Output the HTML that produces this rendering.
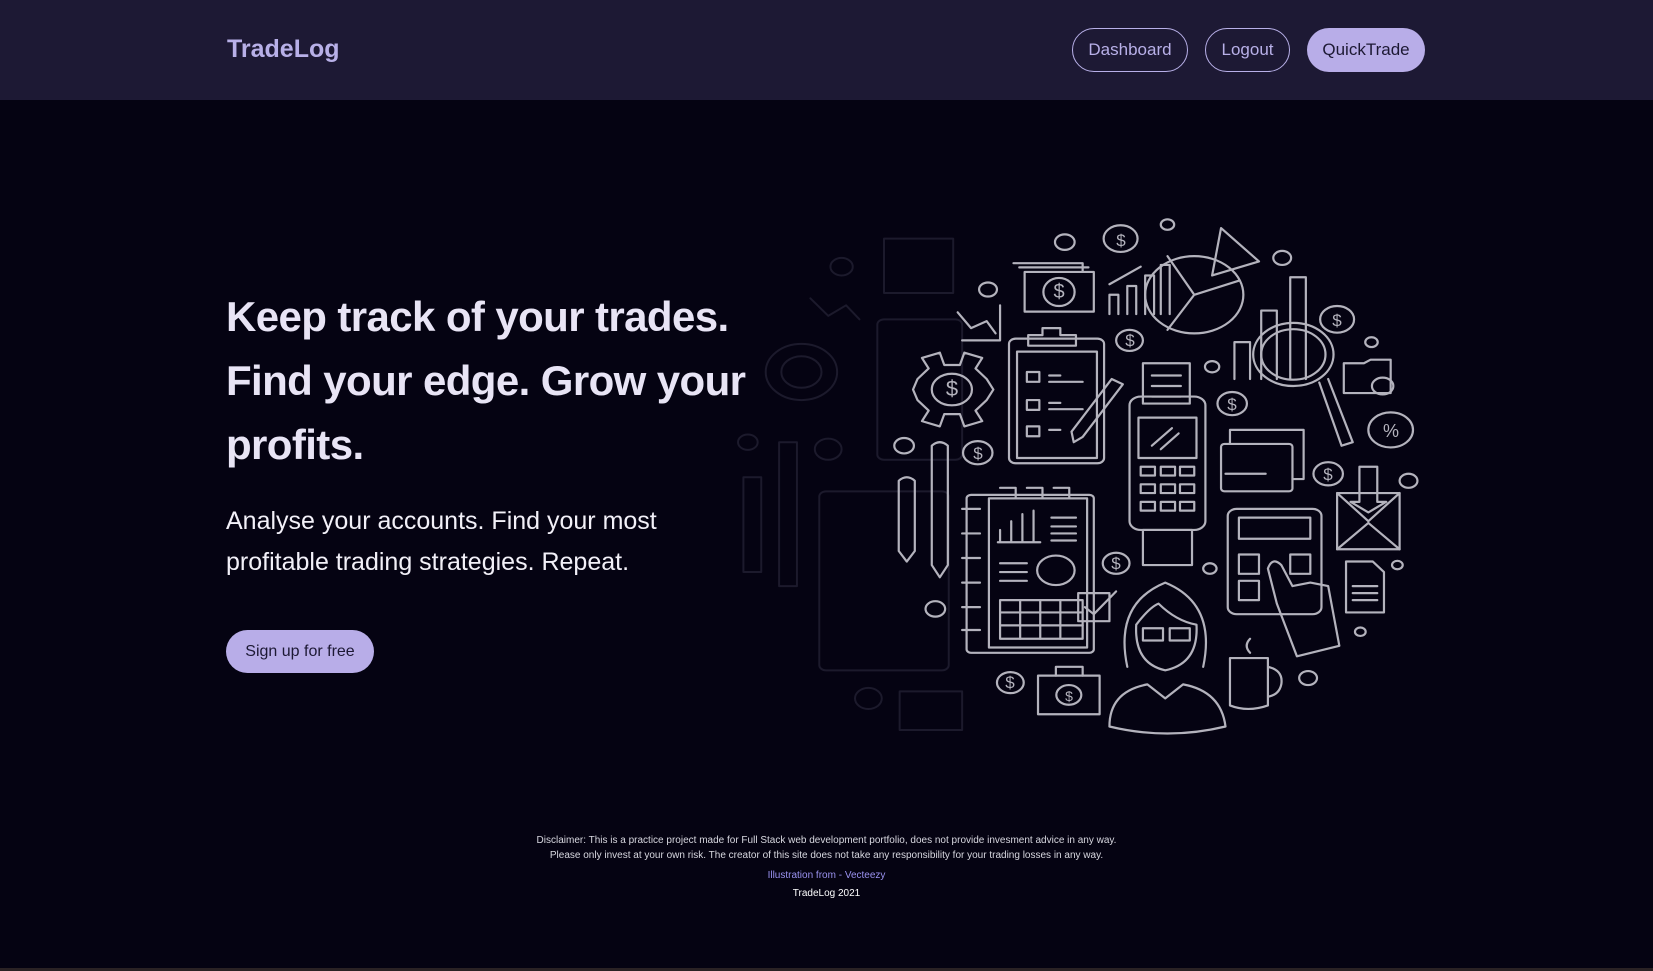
<!DOCTYPE html>
<html><head><meta charset="utf-8"><style>
*{margin:0;padding:0;box-sizing:border-box}
body{width:1653px;height:971px;background:#050312;overflow:hidden;font-family:"Liberation Sans",sans-serif;position:relative}
header{position:absolute;left:0;top:0;width:1653px;height:100px;background:#1d1934}
.logo{position:absolute;left:227px;top:35px;font-size:25px;font-weight:bold;color:#b8b0e8}
.btn{position:absolute;top:28px;height:44px;border-radius:22px;border:1px solid #b8b0e8;color:#b8b0e8;font-size:17px;line-height:42px;text-align:center}
.qt{background:#b8ade8;color:#1d1934;border:none;line-height:44px}
h1{position:absolute;left:226px;top:285px;width:560px;font-size:42px;line-height:64px;font-weight:bold;color:#e8e4f5;letter-spacing:-0.6px}
.sub{position:absolute;left:226px;top:501px;font-size:25px;line-height:41px;color:#f2f0f8}
.su{position:absolute;left:226px;top:630px;width:148px;height:43px;border-radius:22px;background:#b8ade8;color:#1d1934;font-size:16px;line-height:43px;text-align:center}
.foot{position:absolute;left:0;width:1653px;text-align:center;font-size:10px;color:#d8d8e0}
.bl{position:absolute;left:0;top:968px;width:1653px;height:3px;background:#2a2224}
</style></head><body>
<header>
<div class="logo">TradeLog</div>
<div class="btn" style="left:1072px;width:116px">Dashboard</div>
<div class="btn" style="left:1205px;width:85px">Logout</div>
<div class="btn qt" style="left:1307px;width:118px">QuickTrade</div>
</header>
<h1>Keep track of your trades. Find your edge. Grow your profits.</h1>
<div class="sub">Analyse your accounts. Find your most<br>profitable trading strategies. Repeat.</div>
<div class="su">Sign up for free</div>

<svg width="1653" height="971" style="position:absolute;left:0;top:0" >
<g transform="translate(730,200) scale(0.4464,0.351)" fill="none" stroke-linecap="round" stroke-linejoin="round">
<g stroke="#1c1a2c" stroke-width="2" vector-effect="non-scaling-stroke">
<circle cx="160" cy="490" r="80" vector-effect="non-scaling-stroke"/><circle cx="160" cy="490" r="45" vector-effect="non-scaling-stroke"/>
<rect x="345" y="110" width="155" height="155" vector-effect="non-scaling-stroke"/>
<rect x="330" y="340" width="190" height="400" rx="15" vector-effect="non-scaling-stroke"/>
<rect x="200" y="830" width="290" height="510" rx="15" vector-effect="non-scaling-stroke"/>
<rect x="30" y="790" width="40" height="270" vector-effect="non-scaling-stroke"/>
<rect x="110" y="690" width="40" height="410" vector-effect="non-scaling-stroke"/>
<circle cx="40" cy="690" r="22" vector-effect="non-scaling-stroke"/><circle cx="220" cy="710" r="30" vector-effect="non-scaling-stroke"/>
<circle cx="250" cy="190" r="25" vector-effect="non-scaling-stroke"/><circle cx="310" cy="1420" r="30" vector-effect="non-scaling-stroke"/>
<rect x="380" y="1400" width="140" height="110" vector-effect="non-scaling-stroke"/>
<path d="M180 280 L220 330 L260 300 L290 340" vector-effect="non-scaling-stroke"/>
</g>
<g stroke="#b4b3bd" stroke-width="2.2">
<g vector-effect="non-scaling-stroke">
<rect x="625" y="395" width="213" height="355" rx="15" vector-effect="non-scaling-stroke"/>
<rect x="643" y="432" width="179" height="303" vector-effect="non-scaling-stroke"/>
<path d="M668 415 V385 H700 V365 H740 V385 H775 V415 Z" vector-effect="non-scaling-stroke"/>
<rect x="665" y="490" width="28" height="28" vector-effect="non-scaling-stroke"/><rect x="665" y="570" width="28" height="28" vector-effect="non-scaling-stroke"/><rect x="665" y="645" width="28" height="28" vector-effect="non-scaling-stroke"/>
<path d="M715 500H740M715 518H790M715 578H740M715 596H790M715 655H740" vector-effect="non-scaling-stroke"/>
<path d="M770 690 L765 660 L855 510 L880 525 L790 675 Z" vector-effect="non-scaling-stroke"/>
<path d="M445 480 L430 450 L470 435 L480 470 L515 470 L525 435 L565 450 L550 480 L575 510 L590 540 L575 570 L550 600 L565 630 L525 645 L515 610 L480 610 L470 645 L430 630 L445 600 L420 570 L410 540 L420 510 Z" vector-effect="non-scaling-stroke"/>
<circle cx="497" cy="540" r="45" vector-effect="non-scaling-stroke"/>
<rect x="660" y="205" width="155" height="113" vector-effect="non-scaling-stroke"/><path d="M635 180H790V205M648 192H803" vector-effect="non-scaling-stroke"/>
<ellipse cx="737" cy="262" rx="35" ry="40" vector-effect="non-scaling-stroke"/>
<path d="M850 325V270H870V325M890 325V245H910V325M930 325V215H950V325M965 325V185H985V325M850 240L920 190" vector-effect="non-scaling-stroke"/>
<circle cx="1040" cy="270" r="110" vector-effect="non-scaling-stroke"/><path d="M1040 270L980 160M1040 270L1140 230M1040 270L980 370" vector-effect="non-scaling-stroke"/>
<path d="M1080 215L1100 80L1185 175Z" vector-effect="non-scaling-stroke"/>
<rect x="895" y="560" width="170" height="380" rx="25" vector-effect="non-scaling-stroke"/>
<rect x="915" y="620" width="130" height="115" vector-effect="non-scaling-stroke"/>
<path d="M945 700L990 650M965 710L1005 665" vector-effect="non-scaling-stroke"/>
<rect x="925" y="465" width="105" height="115" vector-effect="non-scaling-stroke"/><path d="M945 500H1010M945 530H1010M945 560H1010" vector-effect="non-scaling-stroke"/>
<rect x="920" y="760" width="32" height="25" vector-effect="non-scaling-stroke"/><rect x="965" y="760" width="32" height="25" vector-effect="non-scaling-stroke"/><rect x="1008" y="760" width="32" height="25" vector-effect="non-scaling-stroke"/>
<rect x="920" y="810" width="32" height="25" vector-effect="non-scaling-stroke"/><rect x="965" y="810" width="32" height="25" vector-effect="non-scaling-stroke"/><rect x="1008" y="810" width="32" height="25" vector-effect="non-scaling-stroke"/>
<rect x="920" y="860" width="32" height="25" vector-effect="non-scaling-stroke"/><rect x="965" y="860" width="32" height="25" vector-effect="non-scaling-stroke"/><rect x="1008" y="860" width="32" height="25" vector-effect="non-scaling-stroke"/>
<rect x="925" y="940" width="110" height="100" vector-effect="non-scaling-stroke"/>
<path d="M1130 510V405H1165V510M1190 510V315H1225V510M1255 510V220H1290V510" vector-effect="non-scaling-stroke"/>
<circle cx="1262" cy="440" r="90" vector-effect="non-scaling-stroke"/><circle cx="1262" cy="440" r="72" vector-effect="non-scaling-stroke"/>
<path d="M1320 520L1370 700L1395 690L1340 510" vector-effect="non-scaling-stroke"/>
<path d="M1375 550V465H1420L1435 455H1480V550Z" vector-effect="non-scaling-stroke"/><circle cx="1462" cy="530" r="24" vector-effect="non-scaling-stroke"/>
<circle cx="1480" cy="655" r="50" vector-effect="non-scaling-stroke"/>
<rect x="1100" y="695" width="160" height="135" rx="8" vector-effect="non-scaling-stroke"/><path d="M1120 695V655H1285V795H1260M1110 780H1200" vector-effect="non-scaling-stroke"/>
<rect x="1360" y="835" width="140" height="160" vector-effect="non-scaling-stroke"/><path d="M1360 835L1430 915L1500 835M1360 995L1430 920L1500 995M1410 760V860H1390L1430 890L1470 860H1450V760Z" vector-effect="non-scaling-stroke"/>
<rect x="1115" y="880" width="210" height="300" rx="20" vector-effect="non-scaling-stroke"/><rect x="1140" y="905" width="160" height="60" vector-effect="non-scaling-stroke"/>
<rect x="1140" y="1010" width="45" height="55" vector-effect="non-scaling-stroke"/><rect x="1140" y="1085" width="45" height="55" vector-effect="non-scaling-stroke"/><rect x="1255" y="1010" width="45" height="55" vector-effect="non-scaling-stroke"/>
<path d="M1270 1300L1225 1150L1205 1050Q1215 1015 1235 1040L1260 1100L1300 1090L1340 1100L1365 1270Z" vector-effect="non-scaling-stroke"/>
<path d="M1380 1175V1030H1440L1465 1060V1175Z M1395 1100H1450M1395 1120H1450M1395 1140H1450" vector-effect="non-scaling-stroke"/>
<rect x="530" y="840" width="285" height="450" rx="10" vector-effect="non-scaling-stroke"/><rect x="580" y="850" width="220" height="425" vector-effect="non-scaling-stroke"/>
<path d="M520 880H560M520 950H560M520 1020H560M520 1090H560M520 1160H560M520 1225H560M605 820H640V850M665 820H700V850M725 820H760V850" vector-effect="non-scaling-stroke"/>
<path d="M605 975V940M630 975V915M655 975V895M680 975V885M600 975H695M720 905H775M720 930H775M720 950H775M720 970H775M605 1035H665M605 1060H665M605 1085H665" vector-effect="non-scaling-stroke"/>
<circle cx="730" cy="1055" r="42" vector-effect="non-scaling-stroke"/>
<rect x="605" y="1140" width="185" height="110" vector-effect="non-scaling-stroke"/><path d="M605 1175H790M605 1212H790M650 1140V1250M695 1140V1250M740 1140V1250" vector-effect="non-scaling-stroke"/>
<rect x="780" y="1120" width="70" height="80" vector-effect="non-scaling-stroke"/><path d="M795 1160L815 1180L865 1115" vector-effect="non-scaling-stroke"/>
<path d="M890 1330Q860 1150 975 1090Q1090 1150 1060 1330M910 1210Q940 1160 960 1150Q1000 1200 1045 1210Q1050 1320 975 1340Q905 1320 910 1210M850 1500Q850 1400 935 1380L975 1420L1015 1380Q1100 1400 1110 1500Q980 1540 850 1500M925 1220H970V1255H925ZM985 1220H1030V1255H985Z" vector-effect="non-scaling-stroke"/>
<path d="M1120 1305H1205V1440Q1160 1460 1120 1440Z M1205 1330Q1240 1340 1235 1380Q1230 1410 1205 1415M1165 1290Q1150 1270 1165 1250" vector-effect="non-scaling-stroke"/>
<rect x="690" y="1355" width="138" height="110" vector-effect="non-scaling-stroke"/><path d="M730 1355V1330H790V1355" vector-effect="non-scaling-stroke"/><circle cx="759" cy="1410" r="28" vector-effect="non-scaling-stroke"/>
<path d="M452 700Q470 680 488 700V1040L470 1075L452 1040Z M378 800Q396 780 414 800V1000L396 1030L378 1000Z" vector-effect="non-scaling-stroke"/>
<path d="M520 400H605V300M510 320L540 365L575 345L595 380" vector-effect="non-scaling-stroke"/>
<circle cx="750" cy="120" r="22" vector-effect="non-scaling-stroke"/><circle cx="578" cy="255" r="20" vector-effect="non-scaling-stroke"/><circle cx="980" cy="70" r="15" vector-effect="non-scaling-stroke"/><circle cx="1237" cy="165" r="20" vector-effect="non-scaling-stroke"/><circle cx="1080" cy="475" r="16" vector-effect="non-scaling-stroke"/><circle cx="390" cy="700" r="22" vector-effect="non-scaling-stroke"/><circle cx="460" cy="1165" r="22" vector-effect="non-scaling-stroke"/><circle cx="1075" cy="1050" r="15" vector-effect="non-scaling-stroke"/><circle cx="1520" cy="800" r="20" vector-effect="non-scaling-stroke"/><circle cx="1437" cy="405" r="14" vector-effect="non-scaling-stroke"/><circle cx="1495" cy="1040" r="12" vector-effect="non-scaling-stroke"/><circle cx="1412" cy="1230" r="12" vector-effect="non-scaling-stroke"/><circle cx="1295" cy="1362" r="20" vector-effect="non-scaling-stroke"/>
<circle cx="875" cy="110" r="38" vector-effect="non-scaling-stroke"/><circle cx="895" cy="400" r="30" vector-effect="non-scaling-stroke"/><circle cx="555" cy="720" r="33" vector-effect="non-scaling-stroke"/><circle cx="1125" cy="580" r="33" vector-effect="non-scaling-stroke"/><circle cx="1340" cy="780" r="33" vector-effect="non-scaling-stroke"/><circle cx="1360" cy="340" r="38" vector-effect="non-scaling-stroke"/><circle cx="865" cy="1035" r="30" vector-effect="non-scaling-stroke"/><circle cx="628" cy="1375" r="30" vector-effect="non-scaling-stroke"/>
</g>
</g>
</g>
<g fill="#b4b3bd" font-family="Liberation Sans" font-size="17" text-anchor="middle">
<text x="1121" y="246">$</text><text x="1130" y="346">$</text><text x="978" y="459">$</text><text x="1232" y="410">$</text><text x="1328" y="480">$</text><text x="1337" y="326">$</text><text x="1116" y="569">$</text><text x="1010" y="688">$</text><text x="952" y="396" font-size="22">$</text><text x="1059" y="298" font-size="20">$</text><text x="1069" y="701" font-size="14">$</text><text x="1391" y="437" font-size="18">%</text>
</g>
</svg>

<div class="foot" style="top:835px">Disclaimer: This is a practice project made for Full Stack web development portfolio, does not provide invesment advice in any way.</div>
<div class="foot" style="top:850px">Please only invest at your own risk. The creator of this site does not take any responsibility for your trading losses in any way.</div>
<div class="foot" style="top:870px;color:#9a92f0">Illustration from - Vecteezy</div>
<div class="foot" style="top:888px;color:#fff">TradeLog 2021</div>
<div class="bl"></div>
</body></html>
